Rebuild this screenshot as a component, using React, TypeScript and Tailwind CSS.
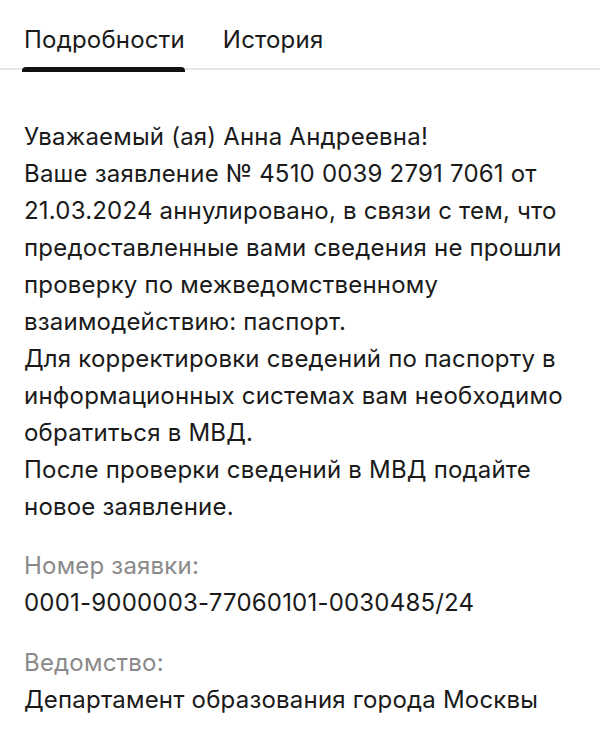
import React from "react";

export default function App() {
  const font = { fontFamily: "Inter, 'Noto Sans', sans-serif" };
  return (
    <div className="w-[600px] min-h-[745px] bg-white text-[#1a1a1a] tracking-[0.2px]" style={font}>
      <div className="relative flex gap-[38px] px-6 pt-[24px]">
        <div className="absolute left-0 right-0 bottom-[2px] h-[2px] bg-[#e6e6e6]" />
        <div className="relative pb-[16px]">
          <span className="text-[24px] leading-[32px] text-[#1a1a1a]">Подробности</span>
          <div className="absolute left-[-2px] right-0 bottom-0 h-[5px] rounded-t-[4px] bg-[#111]" />
        </div>
        <div className="pb-[16px]">
          <span className="text-[24px] leading-[32px] text-[#1a1a1a]">История</span>
        </div>
      </div>
      <div className="px-6 pt-[46px] text-[24px] leading-[37px]">
        <p>
          Уважаемый (ая) Анна Андреевна!
          <br />
          Ваше заявление № 4510 0039 2791 7061 от 21.03.2024 аннулировано, в связи с тем, что предоставленные вами сведения не прошли проверку по межведомственному взаимодействию: паспорт.
          <br />
          Для корректировки сведений по паспорту в информационных системах вам необходимо обратиться в МВД.
          <br />
          После проверки сведений в МВД подайте новое заявление.
        </p>
        <div className="mt-[22px]">
          <div className="text-[#8a8a8a]">Номер заявки:</div>
          <div>0001-9000003-77060101-0030485/24</div>
        </div>
        <div className="mt-[23px]">
          <div className="text-[#8a8a8a]">Ведомство:</div>
          <div>Департамент образования города Москвы</div>
        </div>
      </div>
    </div>
  );
}
